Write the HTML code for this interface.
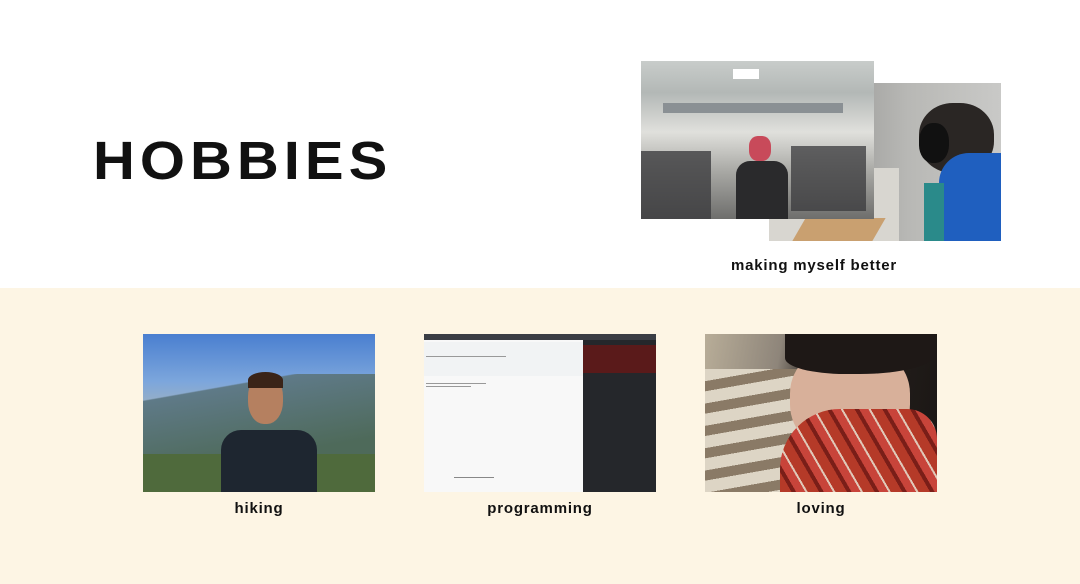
<!DOCTYPE html>
<html><head><style>
body{margin:0;width:1080px;height:584px;position:relative;background:#fff;font-family:"Liberation Sans",sans-serif;overflow:hidden}
.beige{position:absolute;left:0;top:288px;width:1080px;height:296px;background:#fdf5e4}
.ph{position:absolute;width:232px;height:158px;overflow:hidden}
h1{position:absolute;left:93px;top:131px;margin:0;font-size:58px;font-weight:900;letter-spacing:5px;color:#111;line-height:66px;transform:scaleY(0.92);transform-origin:top left}
.lb{position:absolute;font-size:15px;font-weight:bold;letter-spacing:0.8px;color:#111;text-align:center;width:300px}
</style></head><body>
<h1>HOBBIES</h1>
<div class="ph" style="left:769px;top:83px;background:linear-gradient(90deg,#8a8a88 0,#9c9c9a 30%,#b8b8b5 60%,#c9c9c7 100%)">
 <div style="position:absolute;left:0;top:85px;width:130px;height:73px;background:#d8d6d0"></div>
 <div style="position:absolute;left:30px;top:135px;width:80px;height:23px;background:#c9a070;transform:skewX(-30deg)"></div>
 <div style="position:absolute;left:150px;top:20px;width:75px;height:70px;border-radius:45%;background:#2a2624"></div>
 <div style="position:absolute;left:150px;top:40px;width:30px;height:40px;border-radius:45%;background:#111"></div>
 <div style="position:absolute;left:170px;top:70px;width:62px;height:88px;border-radius:30px 0 0 0;background:#1f5fbf"></div>
 <div style="position:absolute;left:155px;top:100px;width:20px;height:58px;background:#2a8a8a"></div>
</div>
<div class="ph" style="left:641px;top:61px;width:233px;background:linear-gradient(180deg,#c8ccca 0,#b3b8b6 20%,#e0e0dc 45%,#a8a8a4 70%,#6e6e6c 100%)">
 <div style="position:absolute;left:92px;top:8px;width:26px;height:10px;background:#fff"></div>
 <div style="position:absolute;left:22px;top:42px;width:180px;height:10px;background:#8a9094"></div>
 <div style="position:absolute;left:0;top:90px;width:70px;height:68px;background:#3c3c3e;opacity:.8"></div>
 <div style="position:absolute;left:150px;top:85px;width:75px;height:65px;background:#3a3a3c;opacity:.75"></div>
 <div style="position:absolute;left:108px;top:75px;width:22px;height:25px;border-radius:40%;background:#c84a5a"></div>
 <div style="position:absolute;left:95px;top:100px;width:52px;height:58px;border-radius:14px 14px 0 0;background:#2a2a2c"></div>
</div>
<div class="lb" style="left:664px;top:257px">making myself better</div>
<div class="beige"></div>
<div class="ph" style="left:143px;top:334px;background:linear-gradient(180deg,#4a7fd0 0,#7ca6dc 30%,#9ab0c4 45%,#6f8a9a 60%,#5a7a5a 90%)">
 <div style="position:absolute;left:0;top:40px;width:232px;height:90px;background:linear-gradient(170deg,transparent 20%,#5f7a88 21%,#4e6a5a 80%)"></div>
 <div style="position:absolute;left:0;top:120px;width:232px;height:38px;background:#4f6a3c"></div>
 <div style="position:absolute;left:105px;top:40px;width:35px;height:50px;border-radius:45%;background:#b58060"></div>
 <div style="position:absolute;left:105px;top:38px;width:35px;height:16px;border-radius:50% 50% 0 0;background:#3a2418"></div>
 <div style="position:absolute;left:78px;top:96px;width:96px;height:62px;border-radius:20px 20px 0 0;background:#1e2630"></div>
</div>
<div class="lb" style="left:109px;top:500px">hiking</div>
<div class="ph" style="left:424px;top:334px;background:#f8f8f8">
 <div style="position:absolute;left:0;top:0;width:232px;height:6px;background:#3a3d44"></div>
 <div style="position:absolute;left:159px;top:6px;width:73px;height:152px;background:#25272b"></div>
 <div style="position:absolute;left:159px;top:11px;width:73px;height:28px;background:#5a1a1a"></div>
 <div style="position:absolute;left:0;top:8px;width:159px;height:34px;background:#f1f3f4"></div>
 <div style="position:absolute;left:2px;top:22px;width:80px;height:1px;background:#999"></div>
 <div style="position:absolute;left:2px;top:49px;width:60px;height:1px;background:#999"></div>
 <div style="position:absolute;left:2px;top:52px;width:45px;height:1px;background:#999"></div>
 <div style="position:absolute;left:30px;top:143px;width:40px;height:1px;background:#888"></div>
</div>
<div class="lb" style="left:390px;top:500px">programming</div>
<div class="ph" style="left:705px;top:334px;background:linear-gradient(100deg,#b8ad98 0,#8e857a 30%,#2a2420 45%,#1a1614 100%)">
 <div style="position:absolute;left:0;top:35px;width:100px;height:123px;background:repeating-linear-gradient(170deg,#ddd5c5 0 12px,#8a7a66 12px 22px)"></div>
 <div style="position:absolute;left:85px;top:10px;width:120px;height:110px;border-radius:45%;background:#d8b09a"></div>
 <div style="position:absolute;left:80px;top:0;width:150px;height:40px;border-radius:0 0 50% 40%;background:#1e1816"></div>
 <div style="position:absolute;left:75px;top:75px;width:157px;height:83px;border-radius:60px 30px 0 0;background:repeating-linear-gradient(60deg,#b53a28 0 10px,#7a1e18 10px 14px,#c8443a 14px 22px,#e0c8b8 22px 24px)"></div>
</div>
<div class="lb" style="left:671px;top:500px">loving</div>
</body></html>
